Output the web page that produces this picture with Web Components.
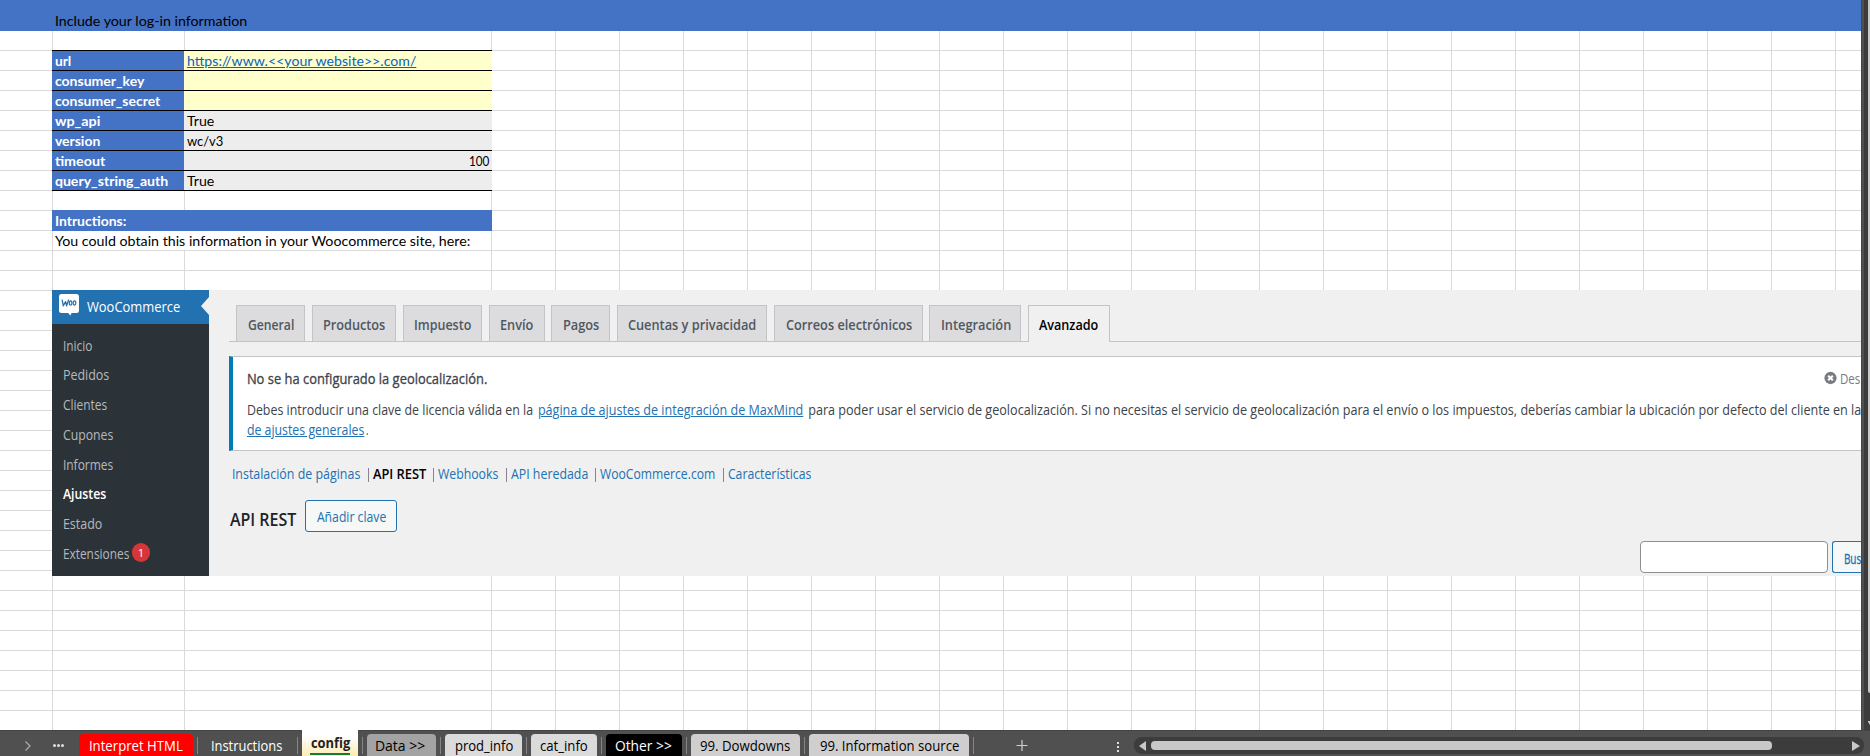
<!DOCTYPE html>
<html lang="es">
<head>
<meta charset="utf-8">
<title>config</title>
<style>
html,body{margin:0;padding:0;width:1870px;height:756px;overflow:hidden;background:#505050}
</style>
</head>
<body>
<work-book></work-book>
<script>
function define(name, html){
  const t=document.createElement('template'); t.innerHTML=html;
  customElements.define(name, class extends HTMLElement{
    connectedCallback(){
      if(this.shadowRoot) return;
      this.attachShadow({mode:'open'}).appendChild(t.content.cloneNode(true));
    }
  });
}

/* A single line of text, set to a given width */
define('fit-text', `<style>
:host{display:inline-block;white-space:nowrap;flex:none}
span{display:inline-block;transform-origin:0 50%;white-space:pre;text-decoration:inherit}
</style><span><slot></slot></span>`);

define('config-row', `<style>
:host{display:grid;grid-template-columns:132px 308px;height:19px;border-top:1px solid #000;line-height:19px}
.k{background:#4472c4;color:#fff;font-weight:700;padding-left:2px}
.v{background:var(--fill,#ededed);padding:0 2px;display:flex}
:host([num]) .v{justify-content:flex-end}
</style><div class="k"><slot name="key"></slot></div><div class="v"><slot></slot></div>`);

define('config-table', `<style>
:host{display:block;width:440px;margin:19px 0 0 52px;border-bottom:1px solid #000}
.y{--fill:#ffffcc}
.link{color:#0563c1;text-decoration:underline}
</style>
<config-row class="y"><fit-text slot="key" w="18">url</fit-text><fit-text class="link" w="231">https://www.&lt;&lt;your website&gt;&gt;.com/</fit-text></config-row>
<config-row class="y"><fit-text slot="key" w="91">consumer_key</fit-text></config-row>
<config-row class="y"><fit-text slot="key" w="107">consumer_secret</fit-text></config-row>
<config-row><fit-text slot="key" w="47">wp_api</fit-text><fit-text w="29">True</fit-text></config-row>
<config-row><fit-text slot="key" w="47">version</fit-text><fit-text w="38">wc/v3</fit-text></config-row>
<config-row num><fit-text slot="key" w="52">timeout</fit-text><fit-text w="22">100</fit-text></config-row>
<config-row><fit-text slot="key" w="115">query_string_auth</fit-text><fit-text w="29">True</fit-text></config-row>`);

define('woo-menu', `<style>
:host{display:block;width:157px;height:286px;background:#2c3338;color:#b4b9be}
.head{display:flex;align-items:center;justify-content:space-between;height:33.5px;background:#2271b1;color:#fff;line-height:32px}
.head svg{flex:none;display:block}
.logo{margin:0 7px 3px 7px}
.head fit-text{margin-right:auto}
.list{padding-top:7.2px}
.item{height:29.75px;line-height:29.75px;padding-left:10px;display:flex;align-items:center}
.on{color:#fff;font-weight:600}
.badge{width:18px;height:19px;line-height:19px;border-radius:10px;background:#d63638;color:#fff;font-size:11.5px;text-align:center;margin-left:2px;margin-top:-2px}
</style>
<div class="head">
<svg class="logo" width="20" height="22" viewBox="0 0 20 22"><path fill="#fff" d="M2.5 0h15A2.5 2.5 0 0 1 20 2.500v14a2.500 2.500 0 0 1-2.500 2.500H12.500L11.500 21.500 9 19H2.500A2.500 2.500 0 0 1 0 16.500v-14A2.500 2.500 0 0 1 2.500 0z"/><path d="M3.200 6.200l1.100 5.600 2.300-4.200 1 4.200 1.900-5.600" fill="none" stroke="#2271b1" stroke-width="1.300" stroke-linejoin="round" stroke-linecap="round"/><ellipse cx="11.600" cy="9" rx="1.300" ry="2.200" fill="none" stroke="#2271b1" stroke-width="1.200"/><ellipse cx="15.500" cy="9" rx="1.300" ry="2.200" fill="none" stroke="#2271b1" stroke-width="1.200"/></svg>
<fit-text w="95">WooCommerce</fit-text>
<svg width="8" height="18" viewBox="0 0 8 18" style="margin-top:-2px"><path fill="#f0f0f0" d="M8 0v18L0 9z"/></svg>
</div>
<div class="list">
<div class="item"><fit-text w="31">Inicio</fit-text></div>
<div class="item"><fit-text w="48">Pedidos</fit-text></div>
<div class="item"><fit-text w="46">Clientes</fit-text></div>
<div class="item"><fit-text w="52">Cupones</fit-text></div>
<div class="item"><fit-text w="52">Informes</fit-text></div>
<div class="item on"><fit-text w="45">Ajustes</fit-text></div>
<div class="item"><fit-text w="41">Estado</fit-text></div>
<div class="item"><fit-text w="68">Extensiones</fit-text><div class="badge">1</div></div>
</div>`);

define('nav-tab', `<style>
:host{display:block;box-sizing:border-box;height:36px;border:1px solid #c3c4c7;border-bottom:0;background:#dcdcde;color:#50575e;line-height:38px;padding:0 9.5px;font-weight:600;white-space:nowrap}
:host([on]){background:#f0f0f0;color:#000;height:37px}
</style><slot></slot>`);

define('settings-notice', `<style>
:host{display:block;box-sizing:border-box;margin:14px 0 0 20px;height:95px;background:#fff;border:1px solid #c3c4c7;border-left:4px solid #007cba;border-right:0;padding:12px 0 0 13px;color:#3c434a;line-height:20px;overflow:hidden}
.row{display:flex}
.top{justify-content:space-between;align-items:center;height:20px}
.dismiss{display:flex;align-items:center;color:#787c82;width:37px}
.dismiss svg{margin-right:2px;margin-top:-3px}
.p{margin-top:11px}
.a{color:#2271b1;text-decoration:underline}
.top>fit-text{-webkit-text-stroke:.3px #3c434a}
</style>
<div class="row top"><fit-text w="242">No se ha configurado la geolocalización.</fit-text>
<div class="dismiss"><svg width="14" height="14" viewBox="0 0 14 14"><circle cx="7" cy="7" r="6.600" fill="#787c82"/><path d="M4.500 4.500l5 5m0-5l-5 5" stroke="#fff" stroke-width="2.200"/></svg><fit-text w="22">Des</fit-text></div></div>
<div class="row p"><fit-text w="291">Debes introducir una clave de licencia válida en la </fit-text><fit-text class="a" w="267">página de ajustes de integración de MaxMind</fit-text><fit-text w="1058"> para poder usar el servicio de geolocalización. Si no necesitas el servicio de geolocalización para el envío o los impuestos, deberías cambiar la ubicación por defecto del cliente en la</fit-text></div>
<div class="row"><fit-text class="a" w="119">de ajustes generales</fit-text><fit-text w="4">.</fit-text></div>`);

define('woo-settings', `<style>
:host{display:grid;grid-template-columns:157px 1652px;width:1809px;height:286px;margin:40px 0 0 52px;background:#f0f0f0;overflow:hidden;font:14px "Open Sans","Noto Sans",sans-serif}
.main{min-width:0}
.tabs{display:flex;gap:6.600px;margin:15px 0 0 20px;padding-left:7px;height:36px;border-bottom:1px solid #c3c4c7}
.sub{display:flex;margin:13px 0 0 22px;height:20px;line-height:20px;color:#2271b1}
.sub i{width:1px;height:14px;background:#8a8290;margin:4px 3px 0 6.500px}
.sub b{color:#000;font-weight:600}
.title{display:flex;margin:16px 0 0 20px;align-items:center;height:32px}
h1{margin:5px 8px 0 0;font-size:17.500px;line-height:24px;font-weight:600;color:#1d2327}
.btn{box-sizing:border-box;height:32px;line-height:32px;border:1px solid #2271b1;border-radius:3px;background:#f6f7f7;color:#2271b1;padding:0 9.500px;width:92px;flex:none}
.search{display:flex;justify-content:flex-end;gap:4px;margin-top:9px}
.box{box-sizing:border-box;width:188px;height:32px;border:1px solid #8c8f94;border-radius:4px;background:#fff}
.cut{width:29px;border-right:0;border-radius:3px 0 0 3px;padding-right:0;line-height:33px;-webkit-text-stroke:.3px #2271b1}
</style>
<woo-menu></woo-menu>
<div class="main">
<div class="tabs">
<nav-tab style="width:69px"><fit-text w="48">General</fit-text></nav-tab>
<nav-tab style="width:84.500px"><fit-text w="64">Productos</fit-text></nav-tab>
<nav-tab style="width:79.500px"><fit-text w="59">Impuesto</fit-text></nav-tab>
<nav-tab style="width:56px"><fit-text w="35">Envío</fit-text></nav-tab>
<nav-tab style="width:59px"><fit-text w="38">Pagos</fit-text></nav-tab>
<nav-tab style="width:150.500px"><fit-text w="130">Cuentas y privacidad</fit-text></nav-tab>
<nav-tab style="width:148.500px"><fit-text w="128">Correos electrónicos</fit-text></nav-tab>
<nav-tab style="width:92px"><fit-text w="72">Integración</fit-text></nav-tab>
<nav-tab on style="width:82px"><fit-text w="61">Avanzado</fit-text></nav-tab>
</div>
<settings-notice></settings-notice>
<div class="sub"><fit-text w="130">Instalación de páginas</fit-text><i></i><b><fit-text w="55">API REST</fit-text></b><i></i><fit-text w="62">Webhooks</fit-text><i></i><fit-text w="79">API heredada</fit-text><i></i><fit-text w="117">WooCommerce.com</fit-text><i></i><fit-text w="85">Características</fit-text></div>
<div class="title"><h1><fit-text w="68">API REST</fit-text></h1><div class="btn"><fit-text w="71">Añadir clave</fit-text></div></div>
<div class="search"><div class="box"></div><div class="btn cut"><fit-text w="19">Bus</fit-text></div></div>
</div>`);

define('sheet-grid', `<style>
:host{display:block;width:1861px;height:730px;overflow:hidden;color:#000;font:14px Lato,Carlito,sans-serif;
background:
 linear-gradient(#dadada,#dadada) 52px 0/1px 100% no-repeat,
 linear-gradient(#dadada,#dadada) 184px 0/1px 100% no-repeat,
 repeating-linear-gradient(90deg,#dadada 0 1px,transparent 1px 64px) 491px 0/1370px 100% no-repeat,
 repeating-linear-gradient(#dadada 0 1px,transparent 1px 20px) 0 50px/100% 680px no-repeat,#fff}
.banner{height:31px;background:#4472c4;padding-left:54px;box-sizing:border-box;padding-top:11px;line-height:20px}
.ins{width:438px;height:21px;line-height:21px;margin:19px 0 0 52px;padding-left:2px;background:#4472c4;color:#fff;font-weight:700}
.note{margin-left:53px;width:437px;padding-left:1px;height:19px;line-height:20px;background:#fff}
</style>
<div class="banner"><fit-text w="194">Include your log-in information</fit-text></div>
<config-table></config-table>
<div class="ins"><fit-text w="73">Intructions:</fit-text></div>
<div class="note"><fit-text w="417">You could obtain this information in your Woocommerce site, here:</fit-text></div>
<woo-settings></woo-settings>`);

define('v-scroll', `<style>
:host{display:block;height:732px;background:linear-gradient(90deg,#464646 0 1px,#505050 1px 3px,#3c3c3c 3px)}
.t{height:693px;margin-left:7px;background:#c8c8c8;border-radius:0 0 0 3px}
svg{display:block;margin:27px 0 0 7px}
</style><div class="t"></div><svg width="2" height="5"><path d="M0 1h2v4L0 2z" fill="#c8c8c8"/></svg>`);

define('sheet-tab', `<style>
:host{display:block;flex:none;box-sizing:border-box;height:22px;margin-top:4px;border-radius:4px 4px 0 0;background:var(--c,transparent);line-height:23px;white-space:nowrap}
:host([on]){height:27px;margin-top:-1px;border-radius:0;background:linear-gradient(#fff 25%,#ffe699 125%);color:#222;font-weight:700;line-height:27px}
:host([on])::after{content:"";display:block;height:2px;width:40px;background:#107c41;margin-top:-3px}
</style><slot></slot>`);

define('sheet-bar', `<style>
:host{display:flex;height:26px;color:#000;font:14.500px "Open Sans","Noto Sans",sans-serif}
.seg{background:#505050;box-shadow:inset 0 1px #444;display:flex;height:26px;flex:none}
.a{width:302px;border-radius:0 4px 0 0}
.b{width:1512px;flex:1;border-radius:4px 0 0 0}
.act{background:#fff;width:56px}
i{width:1px;height:17px;background:#858585;margin:7px 4px 0;flex:none}
svg{display:block;flex:none}
.w{color:#fff}
.track{display:flex;align-items:center;box-sizing:border-box;width:730px;height:17px;margin:7px 0 0 12px;border-radius:8px;background:#3c3c3c;padding:0 4px 0 5px}
.thumb{width:621px;height:9px;border-radius:4px;background:#c8c8c8;margin:0 80px 0 5px}
</style>
<div class="seg a">
<svg width="79" height="26"><path d="M25.500 11.500l4.500 4.500-4.500 4.500" fill="none" stroke="#aaa" stroke-width="1.300"/><circle cx="54.500" cy="15.500" r="1.500" fill="#e0e0e0"/><circle cx="58.500" cy="15.500" r="1.500" fill="#e0e0e0"/><circle cx="62.500" cy="15.500" r="1.500" fill="#e0e0e0"/></svg>
<sheet-tab class="w" style="width:114px;padding-left:9px;--c:#f00"><fit-text w="95.500">Interpret HTML</fit-text></sheet-tab>
<i></i><sheet-tab class="w" style="width:91px;padding-left:8px"><fit-text w="73">Instructions</fit-text></sheet-tab><i></i>
</div>
<div class="act"><sheet-tab on style="padding-left:8px"><fit-text w="41">config</fit-text></sheet-tab></div>
<div class="seg b">
<i></i>
<sheet-tab style="width:69px;padding-left:7px;--c:#a3a3a3"><fit-text w="52">Data &gt;&gt;</fit-text></sheet-tab><i></i>
<sheet-tab style="width:77px;padding-left:8.500px;--c:#dbdbdb"><fit-text w="60">prod_info</fit-text></sheet-tab><i></i>
<sheet-tab style="width:66px;padding-left:8px;--c:#dbdbdb"><fit-text w="49.500">cat_info</fit-text></sheet-tab><i></i>
<sheet-tab class="w" style="width:76px;padding-left:8px;--c:#000"><fit-text w="58.500">Other &gt;&gt;</fit-text></sheet-tab><i></i>
<sheet-tab style="width:109px;padding-left:8px;--c:#d0cece"><fit-text w="92">99. Dowdowns</fit-text></sheet-tab><i></i>
<sheet-tab style="width:160px;padding-left:10px;--c:#d0cece"><fit-text w="141">99. Information source</fit-text></sheet-tab><i></i>
<svg width="144" height="26"><path d="M38.500 15.500h11M44 10v11" stroke="#d0d0d0" stroke-width="1.200"/><path d="M139 12h2v2h-2zM139 16h2v2h-2zM139 20h2v2h-2z" fill="#e0e0e0"/></svg>
<div class="track"><svg width="7" height="10"><path d="M7 0v10L0 5z" fill="#c8c8c8"/></svg><div class="thumb"></div><svg width="8" height="10"><path d="M0 0v10L8 5z" fill="#c8c8c8"/></svg></div>
</div>`);

define('work-book', `<style>
:host{display:block;width:1870px;height:756px;overflow:hidden}
.top{display:grid;grid-template-columns:1861px 9px;height:730px}
</style><div class="top"><sheet-grid></sheet-grid><v-scroll></v-scroll></div><sheet-bar></sheet-bar>`);

/* Widths are set once every element has been laid out */
(function fit(root){
  root.querySelectorAll('*').forEach(e=>{
    if(e.localName==='fit-text'){
      const s=e.shadowRoot.querySelector('span'), w=+e.getAttribute('w');
      e.style.width=w+'px';
      const n=s.getBoundingClientRect().width;
      if(n) s.style.transform='translateX(.9px) scaleX('+(w-1.6)/n+')';
    } else if(e.shadowRoot) fit(e.shadowRoot);
  });
})(document);
</script>
</body>
</html>
